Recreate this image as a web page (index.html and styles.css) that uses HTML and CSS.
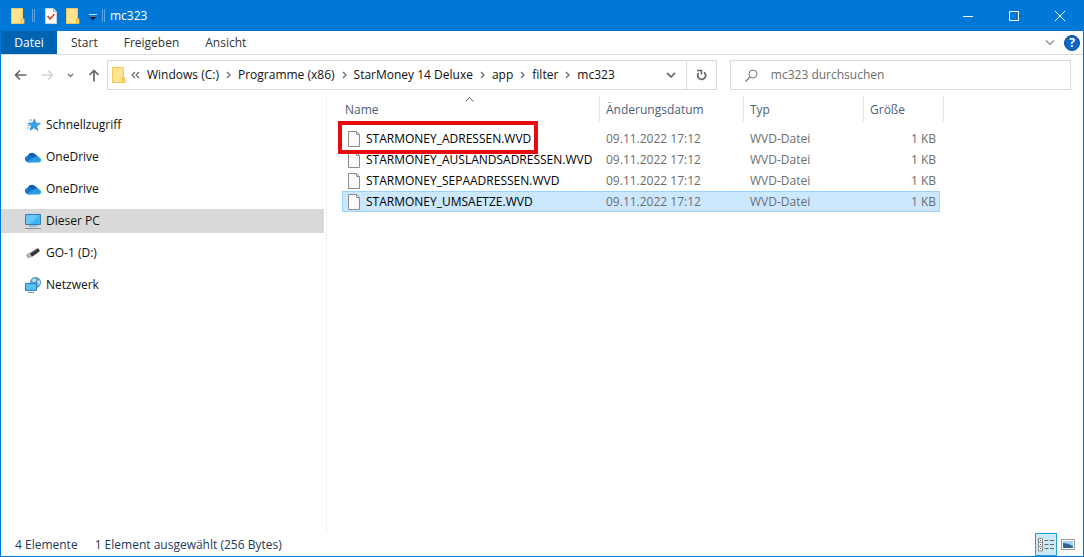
FILE: index.html
```html
<!doctype html>
<html lang="de">
<head>
    <meta charset="utf-8">
    <title>mc323</title>
    <link rel="stylesheet" href="styles.css">
</head>
<body>
    <svg class="sprites" aria-hidden="true">
        <symbol id="folder" viewBox="0 0 14 16">
            <path d="M0.5 0.5h11v10.500h1v4.500h-12z" fill="#ffe391" stroke="#f0c95c"/>
            <path d="M10.500 11h2.500v4.500h-2.500z" fill="#ffe391" stroke="#e8b93e"/>
        </symbol>
        <symbol id="cloud" viewBox="0 0 16 11">
            <path d="M2.500 5A4.500 4.500 0 0 1 10.500 2.500A4 4 0 0 1 13 5L6 9z" fill="#0f5fae"/>
            <path d="M3.500 10.500A3.500 3.500 0 0 1 1 4.500C3 3 6 4 8 5.500L5 10.500z" fill="#1476cc"/>
            <path d="M2 9.500L9.500 5C12 3.500 16 5 16 8C16 9.500 15 10.500 13.500 10.500H3.500z" fill="#2a9ae5"/>
        </symbol>
        <symbol id="file" viewBox="0 0 12 16">
            <path d="M0.500 0.500h8l3 3v12h-11z" fill="#fafafa" stroke="#8d8d8d"/>
            <path d="M8.500 0.500v3h3" fill="none" stroke="#8d8d8d"/>
        </symbol>
        <symbol id="sep" viewBox="0 0 5 8">
            <path d="M1 1l3 3-3 3" fill="none" stroke="#777" stroke-width="1.500"/>
        </symbol>
    </svg>

    <div class="window">
        <header class="titlebar">
            <svg class="app-icon" width="14" height="16"><use href="#folder"/></svg>
            <span class="divider"></span>
            <button class="quick" aria-label="Eigenschaften">
                <svg width="12" height="16" viewBox="0 0 12 16">
                    <path d="M0.500 0.500h8l3 3v12h-11z" fill="#fff" stroke="#c9d3dc"/>
                    <path d="M8.500 0.500v3h3" fill="none" stroke="#9aa"/>
                    <path d="M2.500 8l2.500 3 4.500-5" fill="none" stroke="#dc4a26" stroke-width="1.600"/>
                </svg>
            </button>
            <button class="quick" aria-label="Neuer Ordner"><svg width="14" height="16"><use href="#folder"/></svg></button>
            <button class="quick customize" aria-label="Anpassen">
                <svg width="8" height="7" viewBox="0 0 8 7">
                    <path d="M0 0.500h8" stroke="#c9dcf5"/>
                    <path d="M0 2h8L4 6.500z" fill="#06153a"/>
                    <path d="M0.500 2.500h7" stroke="#9fb8dc" stroke-width="0.600"/>
                </svg>
            </button>
            <span class="divider"></span>
            <h1>mc323</h1>
            <div class="controls">
                <button aria-label="Minimieren"><svg width="10" height="10"><path d="M0 5.500h10"/></svg></button>
                <button aria-label="Maximieren"><svg width="10" height="10"><path d="M0.500 0.500h9v9h-9z"/></svg></button>
                <button aria-label="Schließen"><svg width="10" height="10"><path d="M0 0l10 10M10 0L0 10"/></svg></button>
            </div>
        </header>

        <nav class="ribbon">
            <button class="tab file-tab">Datei</button>
            <button class="tab">Start</button>
            <button class="tab">Freigeben</button>
            <button class="tab">Ansicht</button>
            <div class="ribbon-end">
                <button aria-label="Menüband erweitern"><svg width="10" height="6"><path d="M1 0.500l4 4 4-4" fill="none" stroke="#8a8a8a" stroke-width="1.200"/></svg></button>
                <button class="help" aria-label="Hilfe">?</button>
            </div>
        </nav>

        <div class="navbar">
            <div class="history">
                <button aria-label="Zurück"><svg width="13" height="12"><path d="M12.500 6H1.500M6 1.500L1.500 6 6 10.500" fill="none" stroke="#666" stroke-width="1.700"/></svg></button>
                <button aria-label="Vorwärts"><svg width="13" height="12"><path d="M0.500 6h11M7 1.500L11.500 6 7 10.500" fill="none" stroke="#d4d4d4" stroke-width="1.500"/></svg></button>
                <button aria-label="Letzte Orte"><svg width="7" height="5"><path d="M1 1l2.500 2.500L6 1" fill="none" stroke="#777" stroke-width="1.500"/></svg></button>
                <button aria-label="Nach oben"><svg width="12" height="13"><path d="M6 12.500V1.500M1.500 6L6 1.500 10.500 6" fill="none" stroke="#666" stroke-width="1.700"/></svg></button>
            </div>
            <div class="address">
                <svg width="14" height="16"><use href="#folder"/></svg>
                <svg class="more" width="9" height="8"><path d="M4 1L1 4l3 3M8 1L5 4l3 3" fill="none" stroke="#666" stroke-width="1.200"/></svg>
                <ol class="crumbs">
                    <li><a href="#">Windows (C:)</a><svg width="5" height="8"><use href="#sep"/></svg></li>
                    <li><a href="#">Programme (x86)</a><svg width="5" height="8"><use href="#sep"/></svg></li>
                    <li><a href="#">StarMoney 14 Deluxe</a><svg width="5" height="8"><use href="#sep"/></svg></li>
                    <li><a href="#">app</a><svg width="5" height="8"><use href="#sep"/></svg></li>
                    <li><a href="#">filter</a><svg width="5" height="8"><use href="#sep"/></svg></li>
                    <li><a href="#">mc323</a></li>
                </ol>
                <button class="drop" aria-label="Vorherige Orte"><svg width="10" height="7"><path d="M1 1l4 4 4-4" fill="none" stroke="#777" stroke-width="1.800"/></svg></button>
                <button class="refresh" aria-label="Aktualisieren">
                    <svg width="11" height="12" viewBox="0 0 11 12"><path d="M8 3.200A4 4 0 1 1 2.500 4" fill="none" stroke="#666" stroke-width="1.800"/><path d="M1 1.500h4.500v4" fill="none" stroke="#666" stroke-width="1.600"/></svg>
                </button>
            </div>
            <label class="search">
                <svg width="13" height="13"><circle cx="8" cy="5" r="4" fill="none" stroke="#777"/><path d="M5 8l-4.500 4.500" stroke="#777" stroke-width="1.200"/></svg>
                <input type="text" placeholder="mc323 durchsuchen" aria-label="mc323 durchsuchen">
            </label>
        </div>

        <div class="content">
            <nav class="tree">
                <a href="#">
                    <svg width="16" height="16" viewBox="0 0 16 16"><path d="M9.500 2l1.200 4.200 4.800.1-3.900 2.600 1.200 4.600-3.800-2.800-4 2.600 1.500-4.500L3 6.200l4.600-.2z" fill="#35a5ea" stroke="#1d7fc5" stroke-width="0.700"/><path d="M4 3h3M2.500 8.500h2.500M2 11h2.500" stroke="#5eb8ef"/></svg>
                    Schnellzugriff
                </a>
                <a href="#"><svg width="16" height="11"><use href="#cloud"/></svg>OneDrive</a>
                <a href="#"><svg width="16" height="11"><use href="#cloud"/></svg>OneDrive</a>
                <a href="#" class="current">
                    <svg width="16" height="16" viewBox="0 0 16 16"><path d="M0.500 1.500h15v10h-15z" fill="#43b4f3" stroke="#3a7ba8"/><path d="M1 2h13L5 11H1z" fill="#68c8fa"/><path d="M4 13h8" stroke="#55a0cf"/><path d="M0 15.500h16" stroke="#8095a5"/></svg>
                    Dieser PC
                </a>
                <a href="#">
                    <svg width="16" height="16" viewBox="0 0 16 16"><path d="M5 8l7-4.500q2-.5 2.500 1.500v1.500L7.500 11.500q-2 .5-2.500-3.500z" fill="#343434"/><path d="M6 8l7-4.500" stroke="#777"/><path d="M1.500 10L5 8l1.500 3.500L3 13z" fill="#b5b5b5" stroke="#777" stroke-width="0.500"/></svg>
                    GO-1 (D:)
                </a>
                <a href="#">
                    <svg width="16" height="16" viewBox="0 0 16 16"><circle cx="10.500" cy="5.500" r="5.200" fill="#5ba3c8" stroke="#3e83aa" stroke-width="0.600"/><path d="M6.500 3q2-2 4-1.500l1 2-3 2zM12 4l3-1v4l-2 1z" fill="#b5deea"/><path d="M0.500 6.500h11v7h-11z" fill="#57c0f5" stroke="#2d80b8"/><path d="M3 15.500h6" stroke="#5795bd"/></svg>
                    Netzwerk
                </a>
            </nav>

            <main class="files">
                <table>
                    <colgroup><col class="c-name"><col class="c-date"><col class="c-type"><col class="c-size"></colgroup>
                    <thead>
                        <tr>
                            <th class="sorted">Name<svg width="9" height="5"><path d="M0.500 4.500l4-4 4 4" fill="none" stroke="#666"/></svg></th>
                            <th>Änderungsdatum</th>
                            <th>Typ</th>
                            <th>Größe</th>
                        </tr>
                    </thead>
                    <tbody>
                        <tr class="marked"><td><svg width="12" height="16"><use href="#file"/></svg>STARMONEY_ADRESSEN.WVD</td><td>09.11.2022 17:12</td><td>WVD-Datei</td><td>1 KB</td></tr>
                        <tr><td><svg width="12" height="16"><use href="#file"/></svg>STARMONEY_AUSLANDSADRESSEN.WVD</td><td>09.11.2022 17:12</td><td>WVD-Datei</td><td>1 KB</td></tr>
                        <tr><td><svg width="12" height="16"><use href="#file"/></svg>STARMONEY_SEPAADRESSEN.WVD</td><td>09.11.2022 17:12</td><td>WVD-Datei</td><td>1 KB</td></tr>
                        <tr class="selected"><td><svg width="12" height="16"><use href="#file"/></svg>STARMONEY_UMSAETZE.WVD</td><td>09.11.2022 17:12</td><td>WVD-Datei</td><td>1 KB</td></tr>
                    </tbody>
                </table>
            </main>
        </div>

        <footer class="status">
            <span>4 Elemente</span>
            <span>1 Element ausgewählt (256 Bytes)</span>
            <div class="views">
                <button class="active" aria-label="Details">
                    <svg width="16" height="14" viewBox="0 0 16 14"><path d="M0.500 0.500h4v12.500h-4zM0.500 4.500h4M0.500 8.500h4" fill="#fff" stroke="#8a8a8a"/><path d="M2 2.500h1M2 6.500h1M2 10.500h1" stroke="#444"/><path d="M6.500 2.500h4M12 2.500h4M6.500 6.500h4M12 6.500h4M6.500 10.500h4M12 10.500h4" stroke="#666"/></svg>
                </button>
                <button aria-label="Große Symbole">
                    <svg width="14" height="11" viewBox="0 0 14 11"><path d="M0.500 0.500h13v10h-13z" fill="#fff" stroke="#999"/><path d="M2 2h10v7H2z" fill="#a9d2f0"/><path d="M2 4q5 0 10 3v2H2z" fill="#2f6290"/></svg>
                </button>
            </div>
        </footer>
    </div>
</body>
</html>
```
FILE: styles.css
```css
*,
*::before,
*::after {
    box-sizing: border-box;
}
body {
    margin: 0;
    font: 12px/16px "Open Sans", "Noto Sans", sans-serif;
    color: #111;
}
button {
    display: flex;
    align-items: center;
    justify-content: center;
    padding: 0;
    border: 0;
    background: none;
    font: inherit;
    color: inherit;
}
a {
    color: inherit;
    text-decoration: none;
}
svg {
    flex: none;
}
.sprites {
    position: absolute;
    width: 0;
    height: 0;
}
.window {
    display: flex;
    flex-direction: column;
    min-height: 100vh;
    border: 1px solid #0078d7;
    border-top: 0;
    background: #fff;
}

/* title bar */
.titlebar {
    display: flex;
    align-items: center;
    height: 31px;
    padding-left: 10px;
    background: #0078d7;
    color: #fff;
}
.divider {
    width: 3px;
    height: 13px;
    margin: 0 10px 0 7px;
    border: 1px solid #5ba6e4;
    border-width: 0 1px;
}
.quick {
    margin-right: 9px;
}
.quick.customize {
    margin: 3px 0 0;
}
.customize + .divider {
    margin: 0 5px;
}
h1 {
    margin: 0;
    font-size: 12px;
    font-weight: 400;
}
.controls {
    display: flex;
    margin-left: auto;
    height: 31px;
}
.controls button {
    width: 46px;
}
.controls path {
    fill: none;
    stroke: #fff;
}

/* ribbon */
.ribbon {
    display: flex;
    height: 24px;
    border-bottom: 1px solid #dadbdc;
}
.tab {
    padding: 0 13px;
    color: #333;
}
.file-tab {
    width: 56px;
    margin-right: 1px;
    padding: 0;
    background: #0063b1;
    color: #fff;
}
.ribbon-end {
    display: flex;
    align-items: center;
    gap: 9px;
    margin-left: auto;
    padding-right: 3px;
}
.help {
    width: 16px;
    height: 16px;
    border: 1px solid #0a4d94;
    border-radius: 50%;
    background: #0a66c8;
    color: #fff;
    font-weight: 700;
}

/* address row */
.navbar {
    display: flex;
    gap: 13px;
    padding: 5px 12px 6px 13px;
}
.history {
    display: flex;
    align-items: center;
    justify-content: space-between;
    width: 86px;
    margin-right: -6px;
}
.address,
.search {
    display: flex;
    align-items: center;
    height: 30px;
    border: 1px solid #d9d9d9;
}
.address {
    flex: 13 1 0;
    padding-left: 4px;
}
.more {
    margin: 0 7px 0 5px;
}
.crumbs {
    display: flex;
    margin: 0;
    padding: 0;
    list-style: none;
    white-space: nowrap;
}
.crumbs li {
    display: flex;
    align-items: center;
}
.crumbs svg {
    margin: 0 7px;
}
.drop {
    width: 30px;
    height: 28px;
    margin-left: auto;
}
.refresh {
    width: 30px;
    height: 28px;
    border-left: 1px solid #d9d9d9;
}
.search {
    flex: 7 1 0;
    gap: 13px;
    padding-left: 14px;
}
.search input {
    flex: 1;
    min-width: 0;
    padding: 0;
    border: 0;
    outline: 0;
    background: none;
    font: inherit;
}
.search input::placeholder {
    color: #6d6d6d;
}

/* tree and file list */
.content {
    display: flex;
    flex: 1;
}
.tree {
    display: flex;
    flex-direction: column;
    gap: 8px;
    flex: 0 0 326px;
    padding: 17px 2px 0 0;
    border-right: 1px solid #f0f0f0;
}
.tree a {
    display: flex;
    align-items: center;
    gap: 5px;
    height: 24px;
    padding-left: 24px;
}
.tree .current {
    background: #d9d9d9;
}
.files {
    padding-left: 15px;
}
table {
    width: 598px;
    table-layout: fixed;
    border-collapse: separate;
    border-spacing: 0;
    white-space: nowrap;
}
.c-name {
    width: 257px;
}
.c-date {
    width: 144px;
}
.c-type {
    width: 120px;
}
th {
    position: relative;
    height: 26px;
    padding: 2px 0 0 6px;
    border-left: 1px solid #e5e5e5;
    color: #4c607a;
    font-weight: 400;
    text-align: left;
}
th.sorted {
    padding-left: 3px;
    border-left: 0;
}
.sorted svg {
    position: absolute;
    top: 1px;
    left: 48%;
}
th:last-child::after {
    content: "";
    position: absolute;
    top: 0;
    right: -4px;
    height: 26px;
    border-right: 1px solid #e5e5e5;
}
tbody::before {
    content: "";
    display: table-row;
    height: 6px;
}
td {
    height: 21px;
    padding: 0 0 0 7px;
    color: #6d6d6d;
}
td:first-child {
    padding-left: 6px;
    color: #000;
}
td:last-child {
    padding: 0 4px 0 0;
    text-align: right;
}
td svg {
    margin-right: 6px;
    vertical-align: top;
}
.selected td {
    background: #cce8ff;
}
.selected {
    outline: 1px solid #99d1ff;
    outline-offset: -1px;
}
.marked td:first-child {
    position: relative;
}
.marked td:first-child::after {
    content: "";
    position: absolute;
    top: -7px;
    left: -4px;
    width: 200px;
    height: 33px;
    border: 4px solid #e60a0f;
}

/* status bar */
.status {
    display: flex;
    align-items: center;
    gap: 17px;
    height: 23px;
    padding: 0 8px 0 14px;
    color: #1e395b;
}
.views {
    display: flex;
    gap: 4px;
    margin-left: auto;
}
.views button {
    height: 23px;
}
.views .active {
    width: 22px;
    border: 1px solid #26a0da;
    background: #cbe8f6;
}
```
